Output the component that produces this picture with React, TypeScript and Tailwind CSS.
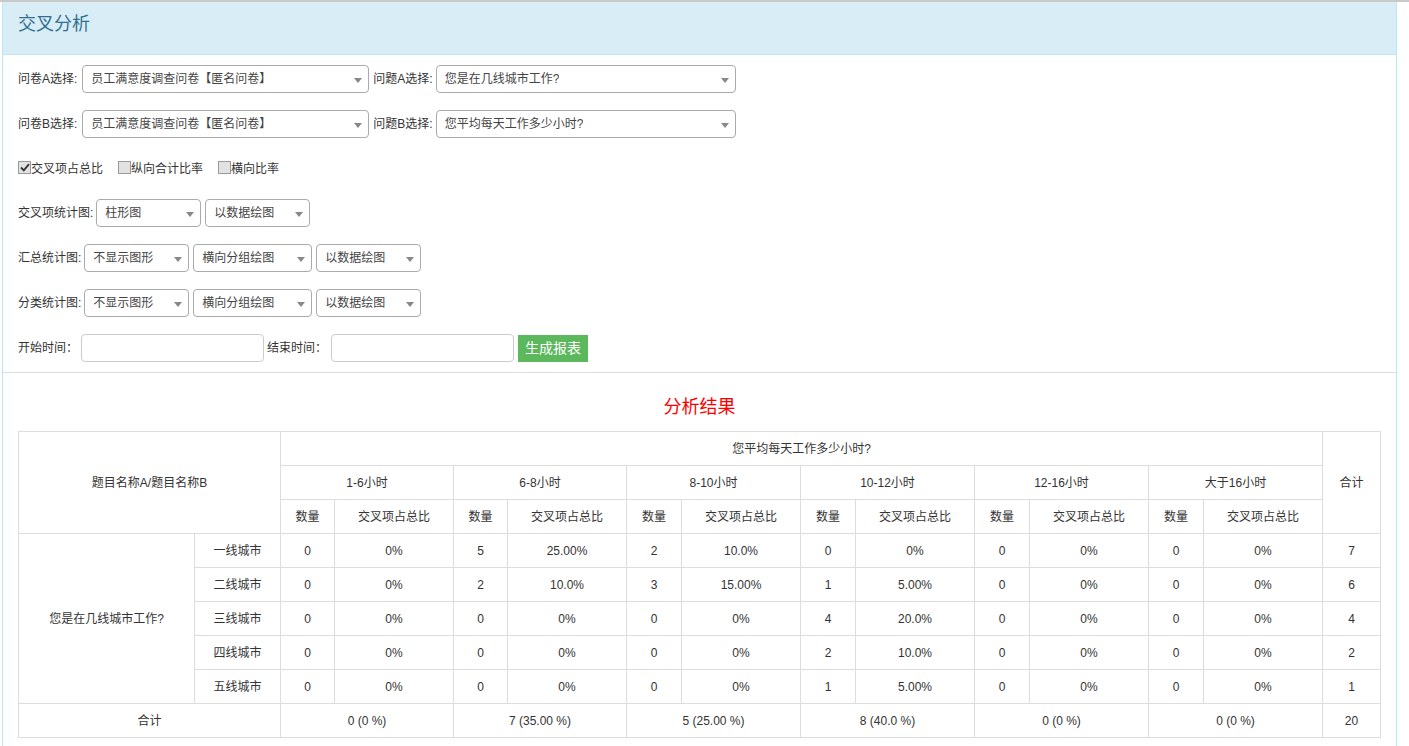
import React from "react";

const FONT = "font-['Liberation_Sans','Noto_Sans_CJK_SC',sans-serif]";

type Cell = [number, string];

const GROUPS = ["1-6小时", "6-8小时", "8-10小时", "10-12小时", "12-16小时", "大于16小时"];

const ROWS: { city: string; cells: Cell[]; total: number }[] = [
  { city: "一线城市", cells: [[0, "0%"], [5, "25.00%"], [2, "10.0%"], [0, "0%"], [0, "0%"], [0, "0%"]], total: 7 },
  { city: "二线城市", cells: [[0, "0%"], [2, "10.0%"], [3, "15.00%"], [1, "5.00%"], [0, "0%"], [0, "0%"]], total: 6 },
  { city: "三线城市", cells: [[0, "0%"], [0, "0%"], [0, "0%"], [4, "20.0%"], [0, "0%"], [0, "0%"]], total: 4 },
  { city: "四线城市", cells: [[0, "0%"], [0, "0%"], [0, "0%"], [2, "10.0%"], [0, "0%"], [0, "0%"]], total: 2 },
  { city: "五线城市", cells: [[0, "0%"], [0, "0%"], [0, "0%"], [1, "5.00%"], [0, "0%"], [0, "0%"]], total: 1 },
];

const TOTALS = ["0 (0 %)", "7 (35.00 %)", "5 (25.00 %)", "8 (40.0 %)", "0 (0 %)", "0 (0 %)"];

function Select({ value, width }: { value: string; width: string }) {
  return (
    <div className={`relative flex h-[28px] items-center rounded-[4px] border border-[#aaa] bg-white pl-[8px] text-[12px] text-[#444] ${width}`}>
      <span className="truncate">{value}</span>
      <span className="absolute right-[6px] top-[12px] h-0 w-0 border-x-[4px] border-t-[5px] border-x-transparent border-t-[#888]" />
    </div>
  );
}

function Check({ checked, label }: { checked?: boolean; label: string }) {
  return (
    <label className="flex items-center">
      <span className="mb-[3px] flex h-[13px] w-[13px] items-center justify-center border border-[#9a9a9a] bg-[#e2e2e2]">
        {checked && (
          <svg width="10" height="9" viewBox="0 0 10 9">
            <path d="M1 4.5 L3.8 7.3 L9 1.2" fill="none" stroke="#333" strokeWidth="1.8" />
          </svg>
        )}
      </span>
      <span>{label}</span>
    </label>
  );
}

const td = "h-[34px] border border-[#ddd] p-0 text-center align-middle";

export default function App() {
  return (
    <div className={`min-h-screen bg-white text-[12px] text-[#333] ${FONT}`}>
      <div className="h-[2px] bg-[#c9c9c9]" />
      <div className="ml-[2px] w-[1395px] border-x border-[#bce8f1]">
        <div className="h-[53px] border-b border-[#bce8f1] bg-[#d9edf7] px-[15px] pt-[10px]">
          <h3 className="text-[18px] leading-[24px] text-[#31708f]">交叉分析</h3>
        </div>

        <div className="flex flex-col gap-[17px] px-[15px] pb-[10px] pt-[10px]">
          <div className="flex h-[28px] items-center">
            <span>问卷A选择:</span>
            <div className="ml-[5px]"><Select value="员工满意度调查问卷【匿名问卷】" width="w-[287px]" /></div>
            <span className="ml-[4px]">问题A选择:</span>
            <div className="ml-[3px]"><Select value="您是在几线城市工作?" width="w-[300px]" /></div>
          </div>
          <div className="flex h-[28px] items-center">
            <span>问卷B选择:</span>
            <div className="ml-[5px]"><Select value="员工满意度调查问卷【匿名问卷】" width="w-[287px]" /></div>
            <span className="ml-[4px]">问题B选择:</span>
            <div className="ml-[3px]"><Select value="您平均每天工作多少小时?" width="w-[300px]" /></div>
          </div>
          <div className="flex h-[27px] items-center gap-[15px]">
            <Check checked label="交叉项占总比" />
            <Check label="纵向合计比率" />
            <Check label="横向比率" />
          </div>
          <div className="flex h-[28px] items-center gap-[4px]">
            <span className="mr-[-1px]">交叉项统计图:</span>
            <Select value="柱形图" width="w-[105px]" />
            <Select value="以数据绘图" width="w-[105px]" />
          </div>
          <div className="flex h-[28px] items-center gap-[4px]">
            <span className="mr-[-1px]">汇总统计图:</span>
            <Select value="不显示图形" width="w-[105px]" />
            <Select value="横向分组绘图" width="w-[119px]" />
            <Select value="以数据绘图" width="w-[105px]" />
          </div>
          <div className="flex h-[28px] items-center gap-[4px]">
            <span className="mr-[-1px]">分类统计图:</span>
            <Select value="不显示图形" width="w-[105px]" />
            <Select value="横向分组绘图" width="w-[119px]" />
            <Select value="以数据绘图" width="w-[105px]" />
          </div>
          <div className="flex h-[28px] items-center">
            <span>开始时间：</span>
            <input className="ml-[3px] h-[28px] w-[183px] rounded-[4px] border border-[#ccc] outline-none" />
            <span className="ml-[3px]">结束时间：</span>
            <input className="ml-[4px] h-[28px] w-[183px] rounded-[4px] border border-[#ccc] outline-none" />
            <button className="ml-[4px] h-[27px] w-[70px] bg-[#5cb85c] text-[14px] text-white">生成报表</button>
          </div>
        </div>

        <div className="border-t border-[#ddd] px-[15px] pb-[15px] pt-[22px]">
          <div className="mb-[12px] flex h-[24px] items-center justify-center text-[18px] text-[#ff0000]">分析结果</div>
          <table className="w-[1362px] table-fixed border-collapse">
            <colgroup>
              <col className="w-[176px]" />
              <col className="w-[86px]" />
              <col className="w-[54px]" />
              <col className="w-[119px]" />
              <col className="w-[54px]" />
              <col className="w-[119px]" />
              <col className="w-[55px]" />
              <col className="w-[119px]" />
              <col className="w-[55px]" />
              <col className="w-[119px]" />
              <col className="w-[55px]" />
              <col className="w-[119px]" />
              <col className="w-[55px]" />
              <col className="w-[119px]" />
              <col className="w-[58px]" />
            </colgroup>
            <thead>
              <tr>
                <td className={td} colSpan={2} rowSpan={3}>题目名称A/题目名称B</td>
                <td className={td} colSpan={12}>您平均每天工作多少小时?</td>
                <td className={td} rowSpan={3}>合计</td>
              </tr>
              <tr>
                {GROUPS.map((g) => (
                  <td key={g} className={td} colSpan={2}>{g}</td>
                ))}
              </tr>
              <tr>
                {GROUPS.map((g) => (
                  <React.Fragment key={g}>
                    <td className={td}>数量</td>
                    <td className={td}>交叉项占总比</td>
                  </React.Fragment>
                ))}
              </tr>
            </thead>
            <tbody>
              {ROWS.map((r, i) => (
                <tr key={r.city}>
                  {i === 0 && (
                    <td className={td} rowSpan={5}>您是在几线城市工作?</td>
                  )}
                  <td className={td}>{r.city}</td>
                  {r.cells.map(([n, p], j) => (
                    <React.Fragment key={j}>
                      <td className={td}>{n}</td>
                      <td className={td}>{p}</td>
                    </React.Fragment>
                  ))}
                  <td className={td}>{r.total}</td>
                </tr>
              ))}
              <tr>
                <td className={td} colSpan={2}>合计</td>
                {TOTALS.map((t, j) => (
                  <td key={j} className={td} colSpan={2}>{t}</td>
                ))}
                <td className={td}>20</td>
              </tr>
            </tbody>
          </table>
        </div>
      </div>
    </div>
  );
}
